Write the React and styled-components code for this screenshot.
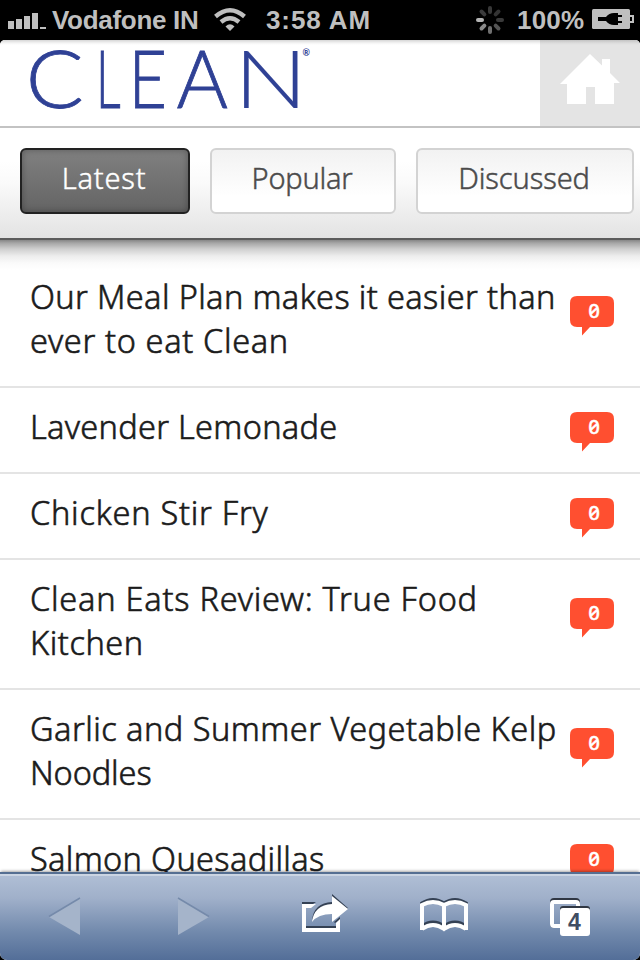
import React from "react";
import styled, { createGlobalStyle, css } from "styled-components";

const GlobalStyle = createGlobalStyle`
  * { box-sizing: border-box; }
  html, body { margin: 0; padding: 0; background: #000; overflow: hidden; }
`;

const Phone = styled.div`
  width: 640px;
  height: 960px;
  display: flex;
  flex-direction: column;
  overflow: hidden;
  background: #000;
  font-family: "Noto Sans", sans-serif;
`;

const StatusBar = styled.div`
  flex: none;
  height: 40px;
  display: flex;
  align-items: center;
  padding: 0 6px 0 8px;
  color: #bfbfbf;
  font: bold 26px/40px "Liberation Sans", Arial, sans-serif;
`;

const StatusText = styled.span`
  width: ${(p) => p.$width}px;
  margin-left: ${(p) => p.$gap}px;
  letter-spacing: ${(p) => p.$spacing}px;
  white-space: nowrap;
  flex: none;
`;

const StatusIcon = styled.svg`
  display: block;
  flex: none;
  margin-left: ${(p) => p.$gap || 0}px;
`;

const Page = styled.main`
  flex: 1;
  min-height: 0;
  display: flex;
  flex-direction: column;
  background: #fff;
  border-radius: 5px 5px 7px 7px;
`;

const Header = styled.header`
  flex: none;
  height: 88px;
  display: flex;
  justify-content: space-between;
  border-bottom: 2px solid #c3c3c3;
  border-radius: 5px 5px 0 0;
  background: linear-gradient(#d6d6d6, #f4f4f4 3px, #fff 5px);
`;

const Logo = styled.svg`
  display: block;
  margin-left: 20px;
  overflow: visible;
`;

const LogoLetter = styled.text`
  font-family: Lato, sans-serif;
  font-weight: 300;
  font-size: 81px;
  fill: #2f4195;
  stroke: #2f4195;
  stroke-width: ${(p) => p.$stroke}px;
`;

const LogoMark = styled.text`
  font-family: Lato, sans-serif;
  font-weight: 700;
  font-size: 9px;
  fill: #2f4195;
`;

const HomeButton = styled.a`
  width: 100px;
  display: flex;
  justify-content: center;
  border-radius: 0 5px 0 0;
  background: linear-gradient(#c2c2c2, #dcdcdc 3px, #e4e4e4 5px);
`;

const Tabs = styled.nav`
  flex: none;
  height: 112px;
  display: flex;
  align-items: flex-start;
  gap: 20px;
  padding: 20px 0 0 20px;
  background: linear-gradient(#fff 30%, #fafafa 50%, #e3e3e3);
  border-bottom: 2px solid #5c5c5c;
`;

const Tab = styled.button`
  flex: none;
  width: ${(p) => p.$width}px;
  height: 66px;
  padding: 0 2px 6px 0;
  border: 2px solid #d3d3d3;
  border-radius: 6px;
  background: linear-gradient(#f2f2f2, #fff 75%);
  color: #4b4b4b;
  font: 300 29px/56px "Noto Sans", sans-serif;
  letter-spacing: ${(p) => p.$spacing}px;
  -webkit-text-stroke: 0.45px currentColor;
  text-align: center;
  white-space: nowrap;
  ${(p) =>
    p.$active &&
    css`
      border-color: #222;
      background: linear-gradient(#808080, #646464);
      color: #fff;
      box-shadow: inset 0 0 7px rgba(0, 0, 0, 0.3);
    `}
`;

const List = styled.ul`
  flex: 1;
  min-height: 0;
  margin: 0;
  padding: 18px 0 0;
  list-style: none;
  overflow: hidden;
  background: linear-gradient(#868686, #a6a6a6 3px, #cfcfcf 9px, #ededed 16px, #fafafa 23px, #fff 30px) no-repeat;
`;

const Row = styled.li`
  display: flex;
  justify-content: space-between;
  padding: 17px 26px 23px 30px;
  border-bottom: 2px solid #e4e4e4;
  color: #1b1b1b;
  font-size: 32.5px;
  line-height: 44px;
`;

const TitleLine = styled.span`
  display: block;
  font-weight: 300;
  white-space: nowrap;
  letter-spacing: ${(p) => p.$spacing}px;
  -webkit-text-stroke: 0.6px currentColor;
`;

const Bubble = styled.div`
  flex: none;
  display: grid;
  width: 44px;
  height: 40px;
  margin-top: ${(p) => (p.$tall ? 21 : 7)}px;
  margin-bottom: -8px;
  & > * { grid-area: 1 / 1; }
`;

const Count = styled.span`
  padding-left: 4px;
  height: 31px;
  color: #fff;
  font: 500 20.5px/29px "Noto Sans", sans-serif;
  font-feature-settings: "zero";
  -webkit-text-stroke: 0.3px #fff;
  text-align: center;
`;

const Toolbar = styled.footer`
  flex: none;
  position: relative;
  height: 88px;
  display: flex;
  border-top: 2px solid #556f92;
  border-radius: 0 0 7px 7px;
  background: linear-gradient(#cbd5e3 0 2px, #afbed5 2px, #a0b0ca 28%, #7189ac 68%, #536e98);
  box-shadow: 0 -2px 3px -1px rgba(0, 0, 0, 0.35);
`;

const ToolButton = styled.a`
  width: 128px;
  height: 86px;
  flex: none;
`;

const ToolCount = styled.text`
  font: bold 23px "Liberation Sans", Arial, sans-serif;
  fill: #3f4d62;
  text-anchor: middle;
`;

const letters = [
  { ch: "C", x: 5.8, sx: 1.06, stroke: 0.8 },
  { ch: "L", x: 76, sx: 0.6, stroke: 1 },
  { ch: "E", x: 108.5, sx: 0.82, stroke: 0.9 },
  { ch: "A", x: 156.5, sx: 0.97, stroke: 0.8 },
  { ch: "N", x: 214, sx: 1.2, stroke: 0.2 },
];

const rows = [
  [["Our Meal Plan makes it easier than", 0.37], ["ever to eat Clean", 0.65]],
  [["Lavender Lemonade", 0.3]],
  [["Chicken Stir Fry", 0.75]],
  [["Clean Eats Review: True Food", 0.75], ["Kitchen", 0.55]],
  [["Garlic and Summer Vegetable Kelp", 0.47], ["Noodles", -0.1]],
  [["Salmon Quesadillas", 0.33]],
];

const spokes = ["#333", "#3a3a3a", "#555", "#707070", "#8a8a8a", "#b5b5b5", "#3a3a3b", "#383838"];

function CommentBubble({ tall }) {
  return (
    <Bubble $tall={tall}>
      <svg width="44" height="40" viewBox="0 0 44 40">
        <path d="M7 0H37Q44 0 44 7V24Q44 31 37 31H20L12 39.5V31H7Q0 31 0 24V7Q0 0 7 0Z" fill="#ff4f30" />
      </svg>
      <Count>0</Count>
    </Bubble>
  );
}

export default function App() {
  return (
    <Phone>
      <GlobalStyle />
      <StatusBar>
        <StatusIcon width="38" height="40" fill="#bfbfbf">
          <path d="M0 21h6v8H0zM8 19h6v10H8zM16 16h6v13h-6zM24 13h6v16h-6zM32 27h6v2h-6z" />
        </StatusIcon>
        <StatusText $gap={6} $width={148} $spacing={-0.3}>Vodafone IN</StatusText>
        <StatusIcon $gap={14} width="34" height="40" fill="none" stroke="#bfbfbf">
          <path d="M1.5 16.5Q16 4 30.5 16.5" strokeWidth="4.4" />
          <path d="M7 22Q16 14.5 25 22" strokeWidth="4.4" />
          <path d="M11.5 26.5Q16 22 20.5 26.5L16 31Z" fill="#bfbfbf" stroke="none" />
        </StatusIcon>
        <StatusText $gap={18} $width={106} $spacing={0.9}>3:58 AM</StatusText>
        <StatusIcon $gap={103} width="30" height="40">
          {spokes.map((c, i) => (
            <line key={c} x1="15" y1="12" x2="15" y2="8" stroke={c} strokeWidth="4" strokeLinecap="round" transform={`rotate(${i * 45 + 45} 15 20)`} />
          ))}
        </StatusIcon>
        <StatusText $gap={12} $width={68} $spacing={0.2}>100%</StatusText>
        <StatusIcon $gap={7} width="43" height="40">
          <rect x="0" y="9" width="38" height="20" rx="1.5" fill="#bfbfbf" />
          <path d="M38 16h3v6h-3" fill="none" stroke="#bfbfbf" strokeWidth="2" />
          <path d="M6 17h8q3-4 8-4h4v2h4v2h-4v4h4v2h-4v2h-4q-5 0-8-4H6z" fill="#000" />
        </StatusIcon>
      </StatusBar>
      <Page>
        <Header>
          <Logo width="300" height="86" role="img" aria-label="CLEAN">
            {letters.map((l) => (
              <LogoLetter key={l.ch} $stroke={l.stroke} transform={`translate(${l.x} 67.5) scale(${l.sx} 1)`}>{l.ch}</LogoLetter>
            ))}
            <LogoMark x="282.5" y="16">®</LogoMark>
          </Logo>
          <HomeButton>
            <svg width="100" height="86" fill="#fff">
              <path d="M50 14L62 25.5V19H70V33L80 43H74V64H55V47H46V64H27V44H20Z" />
            </svg>
          </HomeButton>
        </Header>
        <Tabs>
          <Tab $active $width={170} $spacing={0.8}>Latest</Tab>
          <Tab $width={186} $spacing={-0.25}>Popular</Tab>
          <Tab $width={218} $spacing={-0.1}>Discussed</Tab>
        </Tabs>
        <List>
          {rows.map((lines) => (
            <Row key={lines[0][0]}>
              <div>
                {lines.map(([text, spacing]) => (
                  <TitleLine key={text} $spacing={spacing}>{text}</TitleLine>
                ))}
              </div>
              <CommentBubble tall={lines.length > 1} />
            </Row>
          ))}
        </List>
        <Toolbar>
          <ToolButton>
            <svg width="128" height="86">
              <path d="M80 24V61L49 43Z" fill="#a5b4ca" />
              <path d="M80 24L49 42.5" stroke="#758aaa" strokeWidth="1.5" />
            </svg>
          </ToolButton>
          <ToolButton>
            <svg width="128" height="86">
              <path d="M50 24V61L81 43Z" fill="#a5b4ca" />
              <path d="M50 24L81 42.5" stroke="#758aaa" strokeWidth="1.5" />
            </svg>
          </ToolButton>
          <ToolButton>
            <svg width="128" height="86">
              <path d="M46 28H60L57 30H46ZM50 52H80V54H50ZM78 48L84 43V46L79 49Z" fill="#344154" />
              <path d="M46 30H60L55 34H50V54H80V49L84 45V58H46Z" fill="#fff" />
              <path d="M76 20L92 34L76 46V38Q61 38 56 46Q58 29 76 28Z" fill="#344154" />
              <path d="M76 22L92 35L76 48V40Q62 40 56 48Q58 31 76 30Z" fill="#fff" />
            </svg>
          </ToolButton>
          <ToolButton>
            <svg width="128" height="86" fill="none" strokeWidth="4">
              <path d="M38 54V31Q49 24 60 31Q71 24 82 31V54M38 54Q49 46 60 54Q71 46 82 54M60 31V54" stroke="#344154" transform="translate(0 -1.5)" />
              <path d="M38 56V31Q49 25 60 31Q71 25 82 31V56M38 55Q49 47 60 55Q71 47 82 55M60 31V55" stroke="#fff" />
            </svg>
          </ToolButton>
          <ToolButton>
            <svg width="128" height="86">
              <rect x="40" y="26" width="26" height="26" rx="2" fill="none" stroke="#303743" strokeWidth="4" />
              <rect x="40" y="28" width="26" height="24" rx="2" fill="none" stroke="#fff" strokeWidth="4" />
              <rect x="48" y="32" width="30" height="28" rx="3" fill="#303743" />
              <rect x="48" y="34" width="30" height="28" rx="3" fill="#fff" />
              <ToolCount x="62.5" y="56">4</ToolCount>
            </svg>
          </ToolButton>
        </Toolbar>
      </Page>
    </Phone>
  );
}
